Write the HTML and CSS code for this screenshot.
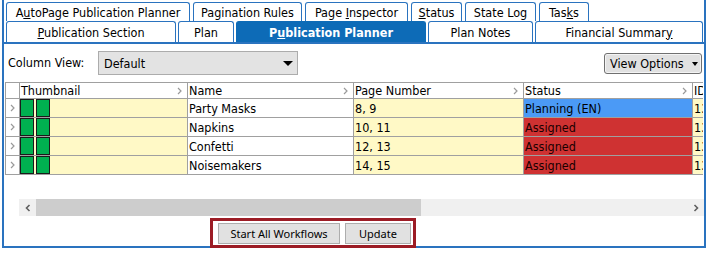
FILE: index.html
```html
<!DOCTYPE html>
<html lang="en">
<head>
  <meta charset="UTF-8">
  <title>Publication Planner</title>
  <link rel="stylesheet" href="styles.css">
</head>
<body>
  <div class="window">
    <div class="tabs">
      <div class="tab-row upper">
        <div class="tab t-autopage"><span>A<u>u</u>toPage Publication Planner</span></div>
        <div class="tab t-pagination"><span>Pagination Rules</span></div>
        <div class="tab t-inspector"><span>Page <u>I</u>nspector</span></div>
        <div class="tab t-status"><span><u>S</u>tatus</span></div>
        <div class="tab t-statelog"><span>State Log</span></div>
        <div class="tab t-tasks"><span>Tas<u>k</u>s</span></div>
      </div>
      <div class="tab-row lower">
        <div class="tab t-section"><span><u>P</u>ublication Section</span></div>
        <div class="tab t-plan"><span>Plan</span></div>
        <div class="tab t-planner active"><span>P<u>u</u>blication Planner</span></div>
        <div class="tab t-notes"><span>Plan Notes</span></div>
        <div class="tab t-financial"><span>Financial Summar<u>y</u></span></div>
      </div>
    </div>

    <div class="panel">
      <div class="toolbar">
        <span class="label">Column View:</span>
        <div class="select">
          <span>Default</span>
          <span class="caret big"></span>
        </div>
        <button class="view-options">
          <span>View Options</span>
          <span class="caret"></span>
        </button>
      </div>

      <div class="grid-wrap">
        <div class="grid" id="grid">
          <div class="hd"></div>
          <div class="hd">Thumbnail<svg class="chev" viewBox="0 0 5 8"><polyline points="1,1 4,4 1,7"/></svg></div>
          <div class="hd">Name<svg class="chev" viewBox="0 0 5 8"><polyline points="1,1 4,4 1,7"/></svg></div>
          <div class="hd">Page Number<svg class="chev" viewBox="0 0 5 8"><polyline points="1,1 4,4 1,7"/></svg></div>
          <div class="hd">Status<svg class="chev" viewBox="0 0 5 8"><polyline points="1,1 4,4 1,7"/></svg></div>
          <div class="hd">ID</div>
        </div>
      </div>

      <div class="scrollbar">
        <div class="sb-btn">
          <svg viewBox="0 0 6 8"><polyline points="4.5,1 1.5,4 4.5,7"/></svg>
        </div>
        <div class="sb-thumb"></div>
        <div class="sb-track"></div>
        <div class="sb-btn">
          <svg viewBox="0 0 6 8"><polyline points="1.5,1 4.5,4 1.5,7"/></svg>
        </div>
      </div>

      <div class="footer">
        <button class="btn start">Start All Workflows</button>
        <button class="btn update">Update</button>
      </div>
    </div>
  </div>

  <script>
    const rows = [
      { name: "Party Masks", pages: "8, 9", status: "Planning (EN)", state: "planning", id: "1350" },
      { name: "Napkins", pages: "10, 11", status: "Assigned", state: "assigned", id: "1351" },
      { name: "Confetti", pages: "12, 13", status: "Assigned", state: "assigned", id: "1352" },
      { name: "Noisemakers", pages: "14, 15", status: "Assigned", state: "assigned", id: "1353" }
    ];

    const grid = document.getElementById("grid");
    const chevron = '<svg class="rowchev" viewBox="0 0 5 8"><polyline points="1,1 4,4 1,7"/></svg>';

    rows.forEach(row => {
      grid.insertAdjacentHTML("beforeend", `
        <div class="cell ind">${chevron}</div>
        <div class="cell thumb"><span class="swatch"></span><span class="swatch"></span></div>
        <div class="cell name">${row.name}</div>
        <div class="cell yellow">${row.pages}</div>
        <div class="cell ${row.state}">${row.status}</div>
        <div class="cell yellow">${row.id}</div>
      `);
    });
  </script>
</body>
</html>
```

FILE: styles.css
```css
* {
  box-sizing: border-box;
}

body {
  margin: 0;
  background-color: #fff;
  color: #000;
  font-family: "DejaVu Sans Condensed", "DejaVu Sans", sans-serif;
  font-size: 12.5px;
}

.window {
  margin-left: 2px;
  width: 704px;
  border-left: 2px solid #2a73bf;
  border-right: 2px solid #2a73bf;
}

/* tab strip */
.tabs {
  height: 42px;
  padding: 2px 0 0 2px;
}

.tab-row {
  display: flex;
}

.tab-row.upper {
  gap: 3px;
  height: 19px;
}

.tab-row.lower {
  gap: 2px;
  height: 21px;
}

.tab {
  flex: none;
  display: flex;
  align-items: center;
  justify-content: center;
  white-space: nowrap;
  background-color: #fff;
  border: 1px solid #2a73bf;
  border-bottom: none;
  border-radius: 3px 3px 0 0;
}

.tab.active {
  background-color: #0d6bb7;
  border-color: #0d6bb7;
  color: #fff;
  font-weight: bold;
}

.t-autopage { width: 184px; }
.t-pagination { width: 109px; }
.t-inspector { width: 103px; }
.t-status { width: 51px; }
.t-statelog { width: 71px; }
.t-tasks { width: 50px; }

.t-section { width: 170px; }
.t-plan { width: 56px; }
.t-planner { width: 190px; }
.t-notes { width: 105px; }
.t-financial { width: 168px; }

/* panel */
.panel {
  border-top: 2px solid #2a73bf;
  border-bottom: 2px solid #2a73bf;
}

.toolbar {
  display: flex;
  align-items: flex-start;
  height: 31px;
  padding: 7px 2px 0 4px;
}

.label {
  width: 90px;
  margin-top: 4px;
}

.select {
  display: flex;
  align-items: center;
  justify-content: space-between;
  width: 200px;
  height: 24px;
  padding: 1px 4px 0 5px;
  background-color: #e3e3e3;
  border: 1px solid #acacac;
}

.caret {
  width: 0;
  height: 0;
  border-left: 3.5px solid transparent;
  border-right: 3.5px solid transparent;
  border-top: 4px solid #000;
}

.caret.big {
  border-left-width: 5px;
  border-right-width: 5px;
  border-top-width: 5px;
}

.view-options {
  display: flex;
  align-items: center;
  justify-content: space-between;
  margin: 2px 0 0 auto;
  width: 98px;
  height: 21px;
  padding: 0 3px 0 5px;
  font: inherit;
  color: #000;
  background-color: #e1e1e1;
  border: 1px solid #707070;
  border-radius: 3px;
  box-shadow: inset 0 0 0 1px #f4f4f4;
}

/* grid */
.grid-wrap {
  margin: 7px 0 0 1px;
  width: 698px;
  height: 117px;
  overflow: hidden;
}

.grid {
  display: grid;
  grid-template-columns: 14px 168px 166px 170px 169px 60px;
  width: max-content;
  border-left: 1px solid #a0a0a0;
}

.hd,
.cell {
  display: flex;
  align-items: center;
  padding-left: 1px;
  white-space: nowrap;
  overflow: hidden;
  border-right: 1px solid #a0a0a0;
  border-bottom: 1px solid #a0a0a0;
}

.hd {
  justify-content: space-between;
  height: 17px;
  padding-right: 5px;
  border-top: 1px solid #a0a0a0;
  background-color: #fff;
}

.cell {
  height: 19px;
}

.chev,
.rowchev {
  width: 5px;
  height: 8px;
  fill: none;
  stroke: #9a9a9a;
  stroke-width: 1.2;
}

.cell.ind {
  justify-content: center;
  padding-left: 0;
}

.cell.thumb {
  gap: 2px;
  padding-left: 0;
  background-color: #fff9c6;
}

.swatch {
  width: 14px;
  height: 18px;
  background-color: #00b050;
  border: 1px solid #1a1a1a;
}

.cell.name {
  background-color: #fff;
}

.cell.yellow {
  background-color: #fff9c6;
}

.cell.planning {
  background-color: #4b9af6;
}

.cell.assigned {
  background-color: #cf3232;
  color: #1a0000;
}

/* horizontal scrollbar */
.scrollbar {
  display: flex;
  margin-left: 15px;
  width: 685px;
  height: 17px;
  background-color: #f0f0f0;
}

.sb-btn {
  flex: none;
  display: flex;
  align-items: center;
  justify-content: center;
  width: 17px;
}

.sb-btn svg {
  width: 6px;
  height: 8px;
  fill: none;
  stroke: #606060;
  stroke-width: 1.6;
}

.sb-thumb {
  flex: none;
  width: 385px;
  background-color: #cdcdcd;
}

.sb-track {
  flex: 1;
}

/* action buttons */
.footer {
  display: flex;
  gap: 5px;
  width: max-content;
  margin: 2px 0 -2px 206px;
  padding: 2px 2px 1px 5px;
  border: 3px solid #9c1c25;
}

.btn {
  height: 21px;
  padding: 0;
  font-family: "Noto Sans", "Liberation Sans", sans-serif;
  font-size: 11px;
  color: #000;
  background-color: #e1e1e1;
  border: 1px solid #adadad;
}

.btn.start {
  width: 122px;
}

.btn.update {
  width: 66px;
}
```
